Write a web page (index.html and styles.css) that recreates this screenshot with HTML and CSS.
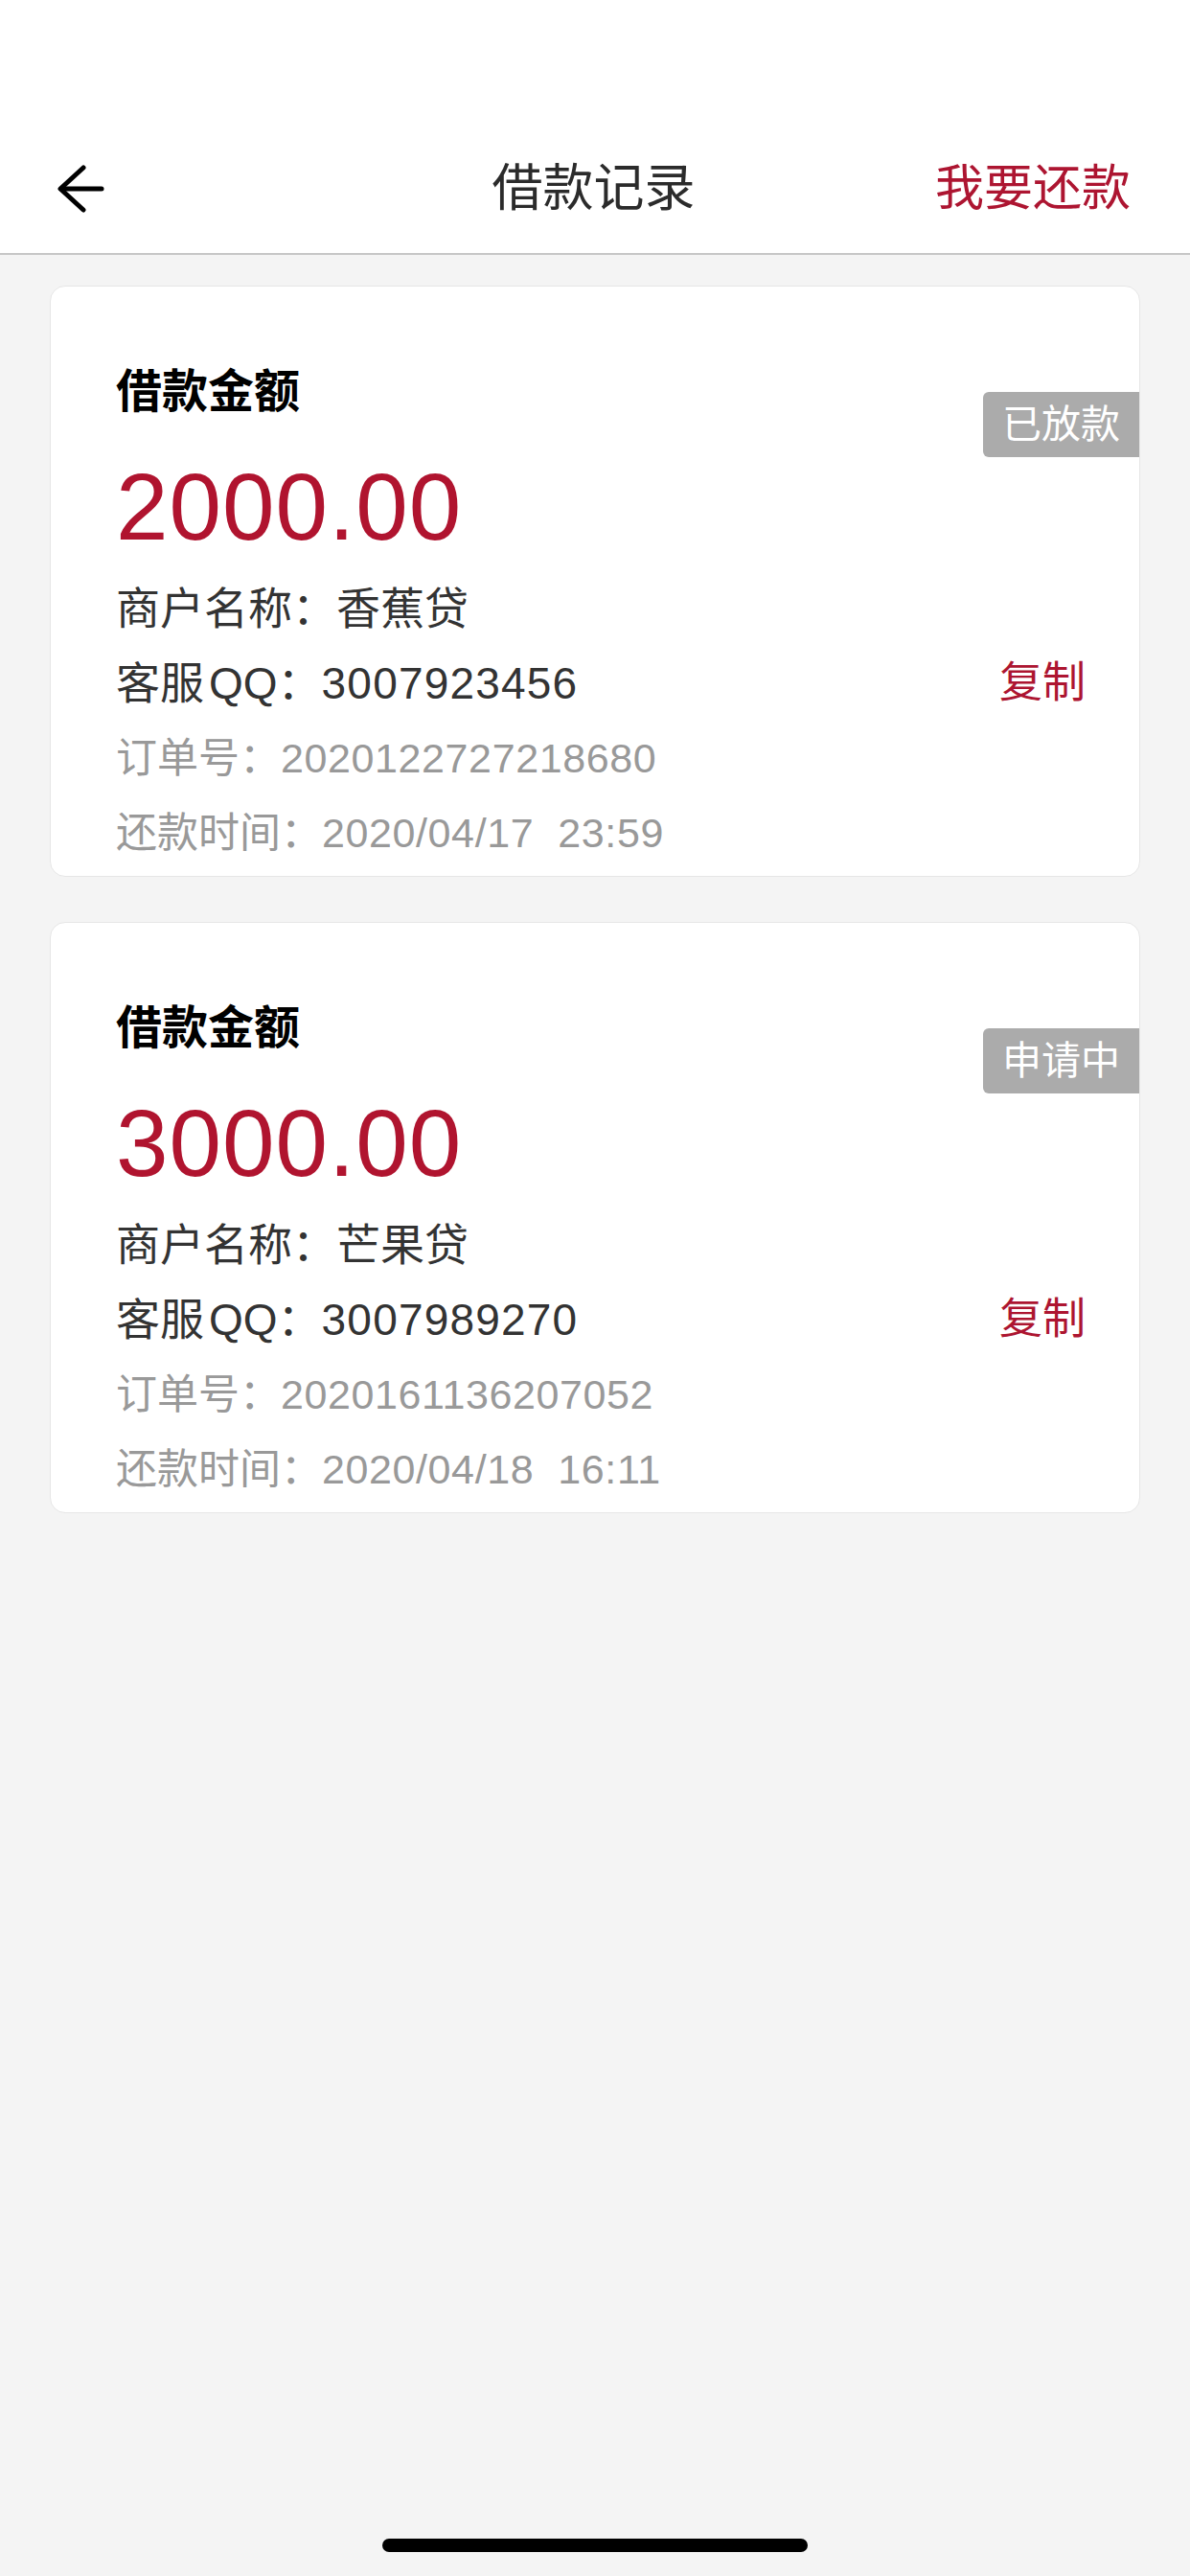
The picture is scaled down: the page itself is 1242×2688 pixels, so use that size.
FILE: index.html
```html
<!DOCTYPE html>
<html lang="zh">
<head>
<meta charset="utf-8">
<title>借款记录</title>
<link rel="stylesheet" href="styles.css">
</head>
<body>
<div class="screen">
  <header class="top">
    <div class="status"></div>
    <nav class="nav">
      <div class="nav-left">
        <svg class="back" width="50" height="50" viewBox="0 0 50 50" fill="none" stroke="#000" stroke-width="5" stroke-linecap="round" stroke-linejoin="round">
          <path d="M47 25 H5"/>
          <path d="M28 3 L4 25 L28 47"/>
        </svg>
      </div>
      <div class="nav-title">借款记录</div>
      <div class="nav-right">我要还款</div>
    </nav>
  </header>

  <main class="list">
    <section class="card">
      <div class="badge">已放款</div>
      <div class="label">借款金额</div>
      <div class="amount">2000.00</div>
      <div class="row dark first">商户名称：香蕉贷</div>
      <div class="row dark split"><span>客服<span class="qq">QQ</span>：<span class="num">3007923456</span></span><span class="copy">复制</span></div>
      <div class="row gray">订单号：<span class="num">2020122727218680</span></div>
      <div class="row gray">还款时间：<span class="num">2020/04/17&nbsp;&nbsp;23:59</span></div>
    </section>

    <section class="card">
      <div class="badge">申请中</div>
      <div class="label">借款金额</div>
      <div class="amount">3000.00</div>
      <div class="row dark first">商户名称：芒果贷</div>
      <div class="row dark split"><span>客服<span class="qq">QQ</span>：<span class="num">3007989270</span></span><span class="copy">复制</span></div>
      <div class="row gray">订单号：<span class="num">2020161136207052</span></div>
      <div class="row gray">还款时间：<span class="num">2020/04/18&nbsp;&nbsp;16:11</span></div>
    </section>
  </main>

  <div class="home-bar"></div>
</div>
</body>
</html>
```

FILE: styles.css
```css
* { box-sizing: border-box; }

html, body {
  margin: 0;
  padding: 0;
}

body {
  width: 1242px;
  height: 2688px;
  background: #f4f4f4;
  font-family: "Liberation Sans", "Noto Sans CJK SC", sans-serif;
  color: #333;
  overflow: hidden;
}

.screen {
  position: relative;
  width: 1242px;
  height: 2688px;
}

.top {
  background: #fff;
  border-bottom: 2px solid #c6c6c6;
}

.status {
  height: 130px;
}

.nav {
  height: 134px;
  display: grid;
  grid-template-columns: 1fr auto 1fr;
  align-items: center;
  padding: 0 62px 0 59px;
}

.nav-left {
  display: flex;
  align-items: center;
}

.back {
  display: block;
}

.nav-title {
  font-size: 53px;
  line-height: 54px;
  color: #2b2b2b;
}

.nav-right {
  justify-self: end;
  font-size: 51px;
  line-height: 54px;
  color: #ad1531;
}

.list {
  padding: 32px 52px 0 52px;
  display: flex;
  flex-direction: column;
  gap: 47px;
}

.card {
  position: relative;
  background: #fff;
  border: 1px solid #e6e6e6;
  border-radius: 16px;
  padding: 86px 56px 6px 68px;
}

.badge {
  position: absolute;
  top: 110px;
  right: 0;
  width: 163px;
  height: 68px;
  background: #ababab;
  color: #fff;
  border-radius: 6px 0 0 6px;
  font-size: 41px;
  line-height: 68px;
  text-align: center;
}

.label {
  font-size: 48px;
  line-height: 48px;
  font-weight: bold;
  color: #000;
}

.amount {
  margin-top: 47px;
  font-size: 98px;
  line-height: 98px;
  letter-spacing: 1px;
  color: #b0142f;
}

.row {
  line-height: 78px;
}

.row.first {
  margin-top: 18px;
}

.row.dark {
  font-size: 46px;
  color: #333;
}

.row.gray {
  font-size: 43px;
  color: #999;
}

.qq {
  margin-left: 5px;
}

.row.dark .num {
  letter-spacing: 1.2px;
}

.row.gray .num {
  letter-spacing: 0.6px;
}

.split {
  display: flex;
  justify-content: space-between;
}

.copy {
  color: #ad1531;
  font-size: 45px;
}

.home-bar {
  position: absolute;
  left: 399px;
  top: 2649px;
  width: 444px;
  height: 14px;
  border-radius: 7px;
  background: #000;
}
```
